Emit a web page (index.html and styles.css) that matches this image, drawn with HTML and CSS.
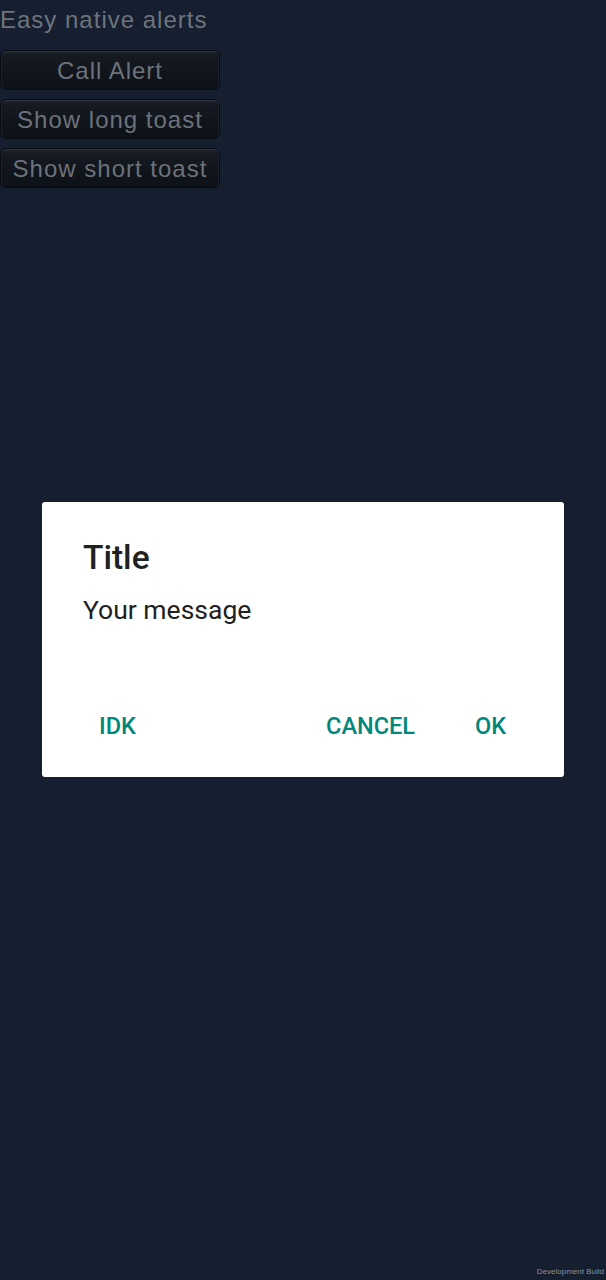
FILE: index.html
```html
<!DOCTYPE html>
<html>
<head>
<meta charset="utf-8">
<link rel="stylesheet" href="styles.css">
</head>
<body>
<div class="app">
  <div class="heading">Easy native alerts</div>
  <div class="btns">
    <div class="ubtn">Call Alert</div>
    <div class="ubtn">Show long toast</div>
    <div class="ubtn">Show short toast</div>
  </div>
</div>
<div class="dialog">
  <div class="d-title">Title</div>
  <div class="d-msg">Your message</div>
  <div class="d-actions">
    <span class="d-btn idk">IDK</span>
    <span class="spacer"></span>
    <span class="d-btn cancel">CANCEL</span>
    <span class="d-btn ok">OK</span>
  </div>
</div>
<div class="devbuild">Development Build</div>
</body>
</html>
```
FILE: styles.css
```css
html, body {
  margin: 0;
  padding: 0;
  background: #161f2f;
  height: 1280px;
  overflow: hidden;
}
body {
  position: relative;
}
.app {
  font-family: "Liberation Sans", Arial, sans-serif;
  color: #6e747d;
}
.heading {
  font-size: 24px;
  letter-spacing: 1px;
  line-height: 24px;
  padding-top: 8px;
  height: 50px;
  box-sizing: border-box;
}
.btns {
  display: flex;
  flex-direction: column;
  gap: 9px;
  width: 220px;
}
.ubtn {
  height: 40px;
  box-sizing: border-box;
  border: 1px solid #080b12;
  border-radius: 6px;
  background: linear-gradient(#252a33 0%, #161a22 10%, #10141b 60%, #0d1118 100%);
  box-shadow: inset 0 1px 0 #2e333c, inset 1px 0 0 #1c2029, inset -1px 0 0 #1c2029;
  font-size: 24px;
  letter-spacing: 1px;
  line-height: 39px;
  text-align: center;
  color: #6c727b;
}
.dialog {
  position: absolute;
  left: 42px;
  top: 502px;
  width: 522px;
  height: 275px;
  background: #fff;
  border-radius: 3px;
  box-sizing: border-box;
  padding: 36px 41px 0 41px;
  font-family: Roboto, "Noto Sans", sans-serif;
  display: flex;
  flex-direction: column;
}
.d-title {
  font-size: 33.5px;
  font-weight: 500;
  color: #212121;
  line-height: 40px;
}
.d-msg {
  font-size: 26.5px;
  color: #212121;
  line-height: 32px;
  margin-top: 16px;
}
.d-actions {
  display: flex;
  align-items: center;
  margin-top: 86px;
  margin-left: -41px;
  margin-right: -41px;
  padding: 0 58px 0 57px;
}
.spacer { flex: 1; }
.d-btn {
  font-size: 23.5px;
  font-weight: 500;
  color: #00877a;
  line-height: 28px;
}
.cancel { margin-right: 60px; }
.devbuild {
  position: absolute;
  right: 2px;
  bottom: 4px;
  font-family: "Liberation Sans", Arial, sans-serif;
  font-size: 8px;
  color: #8a909a;
}
```
